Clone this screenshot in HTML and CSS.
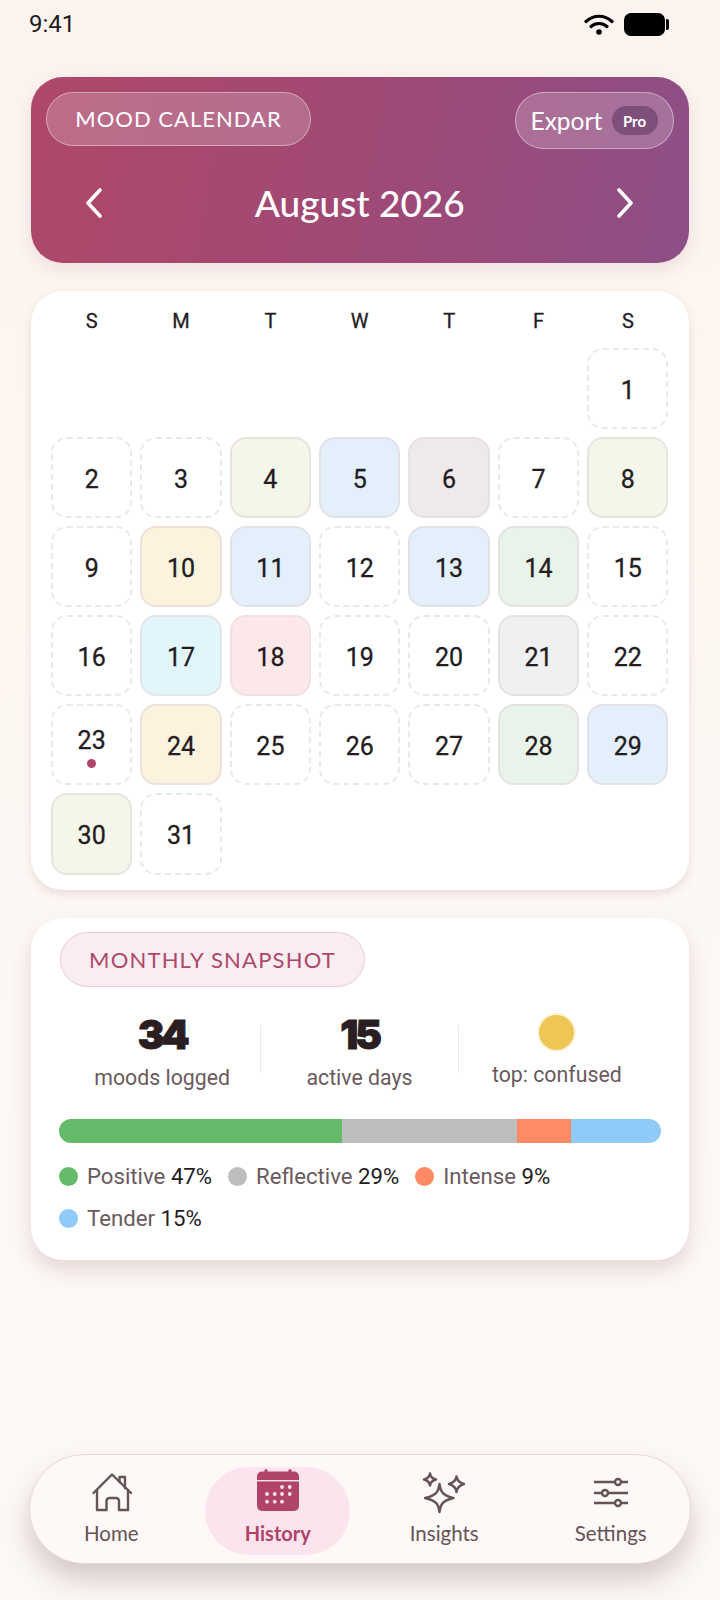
FILE: index.html

```html
<!doctype html>
<html>
<head>
    <meta charset="UTF-8">
    <title>Mood Calendar</title>
    <link rel="stylesheet" href="styles.css">
</head>
<body>
    <div class="status">
        <span class="time">9:41</span>
        <div class="status-icons">
            <svg class="wifi" width="30" height="22" viewBox="0 0 30 22">
                <path d="M2 8.5C9.5 1.5 20.5 1.5 28 8.5" fill="none" stroke="#000" stroke-width="3.2" stroke-linecap="round"/>
                <path d="M7 13.5C11.5 9.5 18.5 9.5 23 13.5" fill="none" stroke="#000" stroke-width="3.2" stroke-linecap="round"/>
                <circle cx="15" cy="19" r="2.8" fill="#000"/>
            </svg>
            <div class="battery"></div>
            <div class="battery-nub"></div>
        </div>
    </div>

    <div class="head-card">
        <div class="head-top">
            <span class="head-pill">MOOD CALENDAR</span>
            <div class="export">Export <span class="pro">Pro</span></div>
        </div>
        <div class="month-row">
            <svg width="20" height="30" viewBox="0 0 20 30"><path d="M16 2L4 15L16 28" fill="none" stroke="#fff" stroke-width="3.6" stroke-linecap="round" stroke-linejoin="round"/></svg>
            <span class="month">August 2026</span>
            <svg width="20" height="30" viewBox="0 0 20 30"><path d="M4 2L16 15L4 28" fill="none" stroke="#fff" stroke-width="3.6" stroke-linecap="round" stroke-linejoin="round"/></svg>
        </div>
    </div>

    <div class="cal-card">
        <div class="week">
            <span>S</span><span>M</span><span>T</span><span>W</span><span>T</span><span>F</span><span>S</span>
        </div>
        <div class="days">
            <div class="blank"></div><div class="blank"></div><div class="blank"></div><div class="blank"></div><div class="blank"></div><div class="blank"></div>
            <div class="day">1</div>
            <div class="day">2</div>
            <div class="day">3</div>
            <div class="day olive">4</div>
            <div class="day blue">5</div>
            <div class="day taupe">6</div>
            <div class="day">7</div>
            <div class="day olive">8</div>
            <div class="day">9</div>
            <div class="day cream">10</div>
            <div class="day blue">11</div>
            <div class="day">12</div>
            <div class="day blue">13</div>
            <div class="day green">14</div>
            <div class="day">15</div>
            <div class="day">16</div>
            <div class="day sky">17</div>
            <div class="day rose">18</div>
            <div class="day">19</div>
            <div class="day">20</div>
            <div class="day grey">21</div>
            <div class="day">22</div>
            <div class="day today">23<i class="today-dot"></i></div>
            <div class="day cream">24</div>
            <div class="day">25</div>
            <div class="day">26</div>
            <div class="day">27</div>
            <div class="day green">28</div>
            <div class="day blue">29</div>
            <div class="day olive">30</div>
            <div class="day">31</div>
        </div>
    </div>

    <div class="snap-card">
        <span class="snap-pill">MONTHLY SNAPSHOT</span>
        <div class="stats">
            <div class="stat">
                <b class="stat-num">34</b>
                <span class="stat-label">moods logged</span>
            </div>
            <div class="stat">
                <b class="stat-num">15</b>
                <span class="stat-label">active days</span>
            </div>
            <div class="stat stat-top">
                <i class="top-dot"></i>
                <span class="stat-label">top: confused</span>
            </div>
        </div>
        <div class="bar">
            <div class="seg c-green" style="width:47%"></div>
            <div class="seg c-grey" style="width:29%"></div>
            <div class="seg c-orange" style="width:9%"></div>
            <div class="seg c-blue" style="width:15%"></div>
        </div>
        <div class="legend">
            <div class="leg"><i class="leg-dot c-green"></i>Positive <b>47%</b></div>
            <div class="leg"><i class="leg-dot c-grey"></i>Reflective <b>29%</b></div>
            <div class="leg"><i class="leg-dot c-orange"></i>Intense <b>9%</b></div>
            <div class="leg"><i class="leg-dot c-blue"></i>Tender <b>15%</b></div>
        </div>
    </div>

    <div class="nav">
        <div class="tab">
            <svg width="42" height="42" viewBox="0 0 42 42" fill="none" stroke="#655357" stroke-width="2.4" stroke-linejoin="round" stroke-linecap="round">
                <path d="M3.500 24L22 5.500L41 24"/>
                <path d="M29.500 13V8H35V19"/>
                <path d="M7 21V41H16.500V32A3 3 0 0 1 19.500 29H26A3 3 0 0 1 29 32V41H38V21"/>
            </svg>
            <span>Home</span>
        </div>
        <div class="tab tab-on">
            <svg width="42" height="42" viewBox="0 0 42 42">
                <rect x="0" y="2.500" width="42" height="39.500" rx="5" fill="#b04468"/>
                <rect x="7.500" y="0" width="3" height="6" rx="1.500" fill="#b04468"/>
                <rect x="31.500" y="0" width="3" height="6" rx="1.500" fill="#b04468"/>
                <rect x="0" y="11" width="42" height="1.400" fill="#fbe4ee"/>
                <g fill="#fbe4ee">
                    <circle cx="25" cy="18" r="1.900"/><circle cx="32.700" cy="18" r="1.900"/>
                    <circle cx="10" cy="25" r="1.900"/><circle cx="17.700" cy="25" r="1.900"/><circle cx="25" cy="25" r="1.900"/><circle cx="32.700" cy="25" r="1.900"/>
                    <circle cx="10" cy="32.700" r="1.900"/><circle cx="17.700" cy="32.700" r="1.900"/><circle cx="25" cy="32.700" r="1.900"/>
                </g>
            </svg>
            <span>History</span>
        </div>
        <div class="tab">
            <svg width="42" height="42" viewBox="0 0 42 42" fill="none" stroke="#655357" stroke-width="2.400" stroke-linejoin="round">
                <path d="M16.500 15C17.500 23 20 26.500 30.500 29C20 31.500 17.500 35 16.500 43C15.500 35 13 31.500 2 29C13 26.500 15.500 23 16.500 15Z"/>
                <path d="M7 4.500C7.500 8 9 9.500 13 10.500C9 11.500 7.500 13 7 16.500C6.500 13 5 11.500 1 10.500C5 9.500 6.500 8 7 4.500Z"/>
                <path d="M33.500 7.500C34 11.500 36 13.500 41 15C36 16.500 34 18.500 33.500 23C33 18.500 31 16.500 26 15C31 13.500 33 11.500 33.500 7.500Z"/>
            </svg>
            <span>Insights</span>
        </div>
        <div class="tab">
            <svg width="42" height="42" viewBox="0 0 42 42" fill="none" stroke="#655357" stroke-width="2.400">
                <path d="M4 13H25M31 13H38"/><circle cx="28" cy="13" r="3"/>
                <path d="M4 24H12M18 24H38"/><circle cx="15" cy="24" r="3"/>
                <path d="M4 34H25M31 34H38"/><circle cx="28" cy="34" r="3"/>
            </svg>
            <span>Settings</span>
        </div>
    </div>
</body>
</html>
```

FILE: styles.css

```css
* { margin: 0; padding: 0; box-sizing: border-box; }
body {
    width: 720px;
    height: 1600px;
    overflow: hidden;
    display: flex;
    flex-direction: column;
    font-family: "Roboto", "Liberation Sans", sans-serif;
    color: #241c1f;
    background: linear-gradient(175deg, #fcf3ee 0%, #fdf6f1 30%, #fdf8f4 60%, #fdf9f7 100%);
}
i { display: block; }

.status { height: 48px; padding: 0 51px 0 29px; display: flex; justify-content: space-between; align-items: center; }
.time { font-size: 24px; color: #1c1c1c; }
.status-icons { display: flex; align-items: center; }
.wifi { margin-right: 10px; }
.battery { width: 41px; height: 23px; background: #000; border-radius: 7px; }
.battery-nub { width: 3px; height: 11px; background: #000; border-radius: 0 2px 2px 0; margin-left: 1px; }

.head-card {
    margin: 29px 31.500px 0 31px;
    height: 186px;
    padding: 15px 15px 0;
    border-radius: 32px;
    background: linear-gradient(100deg, #ae4869 0%, #a04975 50%, #8d4f86 100%);
    box-shadow: 0 6px 18px rgba(150, 80, 110, .14);
    color: #fff;
    font-family: "Lato", "Noto Sans", sans-serif;
}
.head-top { display: flex; justify-content: space-between; align-items: flex-start; }
.head-pill {
    height: 54px;
    width: 265px;
    padding-bottom: 2px;
    display: flex;
    align-items: center;
    justify-content: center;
    border: 1.5px solid rgba(255, 255, 255, .4);
    border-radius: 27px;
    background: rgba(255, 255, 255, .2);
    font-size: 22px;
    letter-spacing: 1px;
}
.export {
    height: 57px;
    width: 159px;
    display: flex;
    align-items: center;
    justify-content: space-between;
    padding: 0 15px;
    border: 1.5px solid rgba(255, 255, 255, .4);
    border-radius: 29px;
    background: rgba(255, 255, 255, .2);
    font-size: 24.500px;
}
.pro {
    width: 46px;
    height: 29px;
    border-radius: 15px;
    background: #7d4f7a;
    display: flex;
    align-items: center;
    justify-content: center;
    font-size: 15px;
    font-weight: 700;
}
.month-row { display: flex; justify-content: space-between; align-items: center; padding: 0 38px; margin-top: 31px; }
.month { font-size: 37px; font-weight: 500; }

.cal-card {
    margin: 28px 31.500px 0 31px;
    height: 599px;
    padding: 16px 20px 0;
    background: #fff;
    border-radius: 32px;
    box-shadow: 0 4px 10px rgba(130, 80, 90, .16);
}
.week { display: grid; grid-template-columns: repeat(7, 1fr); gap: 8px; height: 29px; text-align: center; font-size: 20px; line-height: 29px; -webkit-text-stroke: .3px #241c1f; }
.days { display: grid; grid-template-columns: repeat(7, 1fr); gap: 8px; margin-top: 12px; }
.blank { height: 81px; }
.day {
    height: 81.100px;
    padding-top: 3px;
    display: flex;
    flex-direction: column;
    align-items: center;
    justify-content: center;
    border: 2px dashed #efe6e9;
    border-radius: 16px;
    font-size: 25px;
    -webkit-text-stroke: .3px #241c1f;
}
.olive { background: #f3f6e8; border: 2px solid #e9e2de; }
.blue { background: #e3f0fb; border: 2px solid #e4e0e8; }
.taupe { background: #efeae9; border: 2px solid #e8e1e2; }
.cream { background: #fcf3de; border: 2px solid #eee1db; }
.green { background: #e8f3ea; border: 2px solid #e5e2e0; }
.sky { background: #e1f5fb; border: 2px solid #e2e5ea; }
.rose { background: #fce8e8; border: 2px solid #f0e1e2; }
.grey { background: #eef0f2; border: 2px solid #e5e2e4; }
.today { padding-top: 6px; line-height: 28px; }
.today-dot { width: 9px; height: 9px; border-radius: 50%; background: #b04468; margin-top: 4px; }

.snap-card {
    margin: 28px 31.500px 0 31px;
    height: 342px;
    padding: 14px 27.500px 0 28px;
    background: #fff;
    border-radius: 32px;
    box-shadow: 0 10px 20px rgba(130, 80, 90, .2);
}
.snap-pill {
    display: flex;
    align-items: center;
    justify-content: center;
    width: 305px;
    height: 55px;
    margin-left: 1px;
    border: 1.5px solid #ecc9d6;
    border-radius: 28px;
    background: #f9edf2;
    color: #ae4869;
    font-family: "Lato", "Noto Sans", sans-serif;
    font-size: 22px;
    letter-spacing: 1.200px;
}
.stats { display: flex; margin-top: 38px; padding: 0 6px 0 5px; height: 48px; }
.stat {
    flex: 1;
    display: flex;
    flex-direction: column;
    align-items: center;
    border-left: 1.500px solid #f1e8ea;
    height: 48px;
    white-space: nowrap;
}
.stat:first-child { border-left: 0; }
.stat-num {
    display: block;
    flex-shrink: 0;
    font-family: "Inter", "Roboto", sans-serif;
    font-size: 40px;
    line-height: 40px;
    font-weight: 900;
    letter-spacing: -3px;
    margin-top: -10px;
    -webkit-text-stroke: 1px #2a1e22;
    color: #2a1e22;
}
.stat-label { flex-shrink: 0; margin-top: 9px; font-size: 21.300px; color: #6a5a5e; line-height: 28px; }
.top-dot { flex-shrink: 0; width: 35px; height: 35px; margin-top: -10.500px; border-radius: 50%; background: #eec655; box-shadow: 0 0 0 2px #fdf5da; }
.stat-top .stat-label { margin-top: 11.500px; }

.bar { display: flex; height: 24px; margin-top: 46px; border-radius: 12px; overflow: hidden; }
.seg { height: 100%; }
.c-green { background: #66bb6a; }
.c-grey { background: #bdbdbd; }
.c-orange { background: #ff8a65; }
.c-blue { background: #90caf9; }

.legend { display: flex; flex-wrap: wrap; gap: 14px 16px; margin-top: 19px; }
.leg { display: flex; align-items: center; font-size: 22.200px; color: #6a5a5e; line-height: 28px; white-space: pre; }
.leg b { font-weight: 400; color: #241c1f; }
.leg-dot { width: 19px; height: 19px; border-radius: 50%; margin-right: 9px; }

.nav {
    margin: auto 29px 36px;
    height: 110px;
    padding: 12px 0 8px 2px;
    display: grid;
    grid-template-columns: repeat(4, 166.500px);
    justify-content: center;
    background: #fef9f7;
    border: 1.500px solid #e9d6d8;
    border-radius: 55px;
    box-shadow: 0 16px 28px rgba(100, 60, 70, .26);
    font-family: "Lato", "Noto Sans", sans-serif;
}
.tab {
    display: flex;
    flex-direction: column;
    align-items: center;
    justify-content: flex-start;
    gap: 10px;
    margin: 0 10.750px;
    padding-top: 2px;
    border-radius: 44px;
    font-size: 20.500px;
    color: #655357;
}
.tab svg { flex-shrink: 0; overflow: visible; }
.tab-on { background: #fbe4ee; color: #b04468; font-weight: 700; font-size: 20px; }
```
